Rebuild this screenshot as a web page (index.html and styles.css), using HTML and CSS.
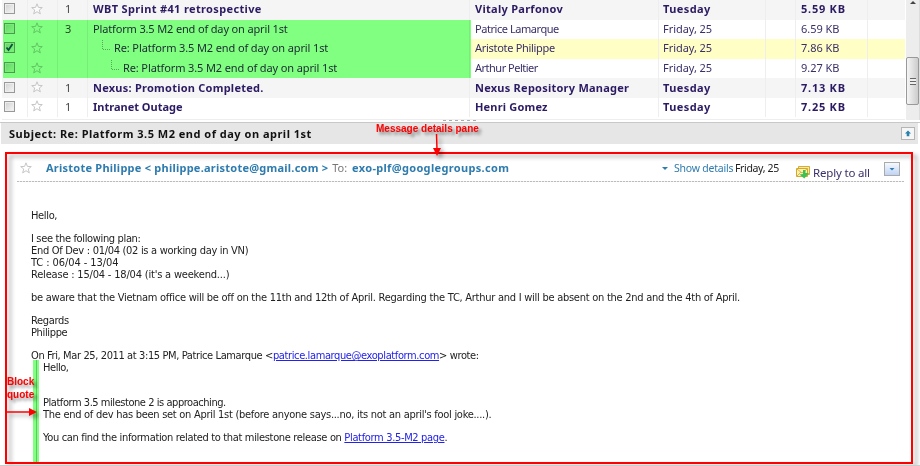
FILE: index.html
```html
<!DOCTYPE html>
<html lang="en">
<head>
<meta charset="utf-8">
<title>Mail</title>
<link rel="stylesheet" href="styles.css">
</head>
<body>
<svg class="defs" width="0" height="0"><defs>
<symbol id="star" viewBox="0 0 12 12"><path d="M6 .8 7.4 4.4 11.3 4.6 8.3 7 9.3 10.9 6 8.7 2.7 10.9 3.7 7 .7 4.6 4.6 4.4Z" fill="#fff" fill-opacity=".6" stroke="#c6c6c6" stroke-width="1"/></symbol>
<symbol id="branch" viewBox="0 0 10 11"><path d="M1.5 0V9.5H10" fill="none" stroke="#aaa" stroke-dasharray="1 1"/></symbol>
</defs></svg>
<main class="app">
<section class="list">
<div class="rows">
<div class="row unread odd"><div><i class="check"></i></div><div><svg class="star"><use href="#star"/></svg></div><div class="count">1</div><div><span class="s1">WBT Sprint #41 retrospective</span></div><div><span class="n1">Vitaly Parfonov</span></div><div class="day">Tuesday</div><div></div><div class="size">5.59 KB</div><div></div></div>
<div class="row"><div><i class="check"></i></div><div><svg class="star"><use href="#star"/></svg></div><div class="count">3</div><div><span class="s2">Platform 3.5 M2 end of day on april 1st</span></div><div><span class="n2">Patrice Lamarque</span></div><div class="day">Friday, 25</div><div></div><div class="size">6.59 KB</div><div></div></div>
<div class="row selected"><div><i class="check"><svg viewBox="0 0 9 9"><path d="M1.5 4.5 3.5 7 7.5 1" fill="none" stroke="#164f7c" stroke-width="1.8"/></svg></i></div><div><svg class="star"><use href="#star"/></svg></div><div></div><div class="reply"><svg class="branch"><use href="#branch"/></svg><span class="s3">Re: Platform 3.5 M2 end of day on april 1st</span></div><div><span class="n3">Aristote Philippe</span></div><div class="day">Friday, 25</div><div></div><div class="size">7.86 KB</div><div></div></div>
<div class="row"><div><i class="check"></i></div><div><svg class="star"><use href="#star"/></svg></div><div></div><div class="reply deep"><svg class="branch"><use href="#branch"/></svg><span class="s3">Re: Platform 3.5 M2 end of day on april 1st</span></div><div><span class="n4">Arthur Peltier</span></div><div class="day">Friday, 25</div><div></div><div class="size">9.27 KB</div><div></div></div>
<div class="row unread odd"><div><i class="check"></i></div><div><svg class="star"><use href="#star"/></svg></div><div class="count">1</div><div><span class="s5">Nexus: Promotion Completed.</span></div><div><span class="n5">Nexus Repository Manager</span></div><div class="day">Tuesday</div><div></div><div class="size">7.13 KB</div><div></div></div>
<div class="row unread last"><div><i class="check"></i></div><div><svg class="star"><use href="#star"/></svg></div><div class="count">1</div><div><span class="s6">Intranet Outage</span></div><div><span class="n6">Henri Gomez</span></div><div class="day">Tuesday</div><div></div><div class="size">7.25 KB</div><div></div></div>
<div class="thread-mark"></div>
</div>
<div class="scrollbar"><i class="up"></i><div class="thumb"><i></i></div></div>
</section>
<div class="splitter"><i></i></div>
<header class="subject"><span>Subject: Re: Platform 3.5 M2 end of day on april 1st</span><button class="collapse" aria-label="Collapse"><svg viewBox="0 0 8 8"><path d="M4 .5 7.5 4H5.5V7H2.5V4H.5Z" fill="#2782ad"/></svg></button></header>
<section class="message">
<div class="head"><svg class="star"><use href="#star"/></svg><div class="people"><b>Aristote Philippe &lt; philippe.aristote@gmail.com &gt;</b> <span class="label">To:</span> <b class="to">exo-plf@googlegroups.com</b></div>
<i class="tri"></i><span class="show">Show details</span><span class="date">Friday, 25</span>
<svg class="mail" viewBox="0 0 14 13"><path d="M2.5.5h11v8h-11z" fill="#fbe9a0" stroke="#d3ad36"/><path d="M.5 2.5h11v8H.5z" fill="#fff0ae" stroke="#d3a92c"/><path d="m1 3 5 4 5-4M1 10l4-4M11 10 7 6" fill="none" stroke="#d9b64d"/><path d="M7 4h2.5v3H13L8.3 12.5 3.5 8.5 7 8Z" fill="#3fc052"/></svg><span class="replyall">Reply to all</span><button class="drop" aria-label="More actions"><i></i></button></div>
<div class="body">
<p class="b0">Hello,</p>
<p><span class="b0">I see the following plan:</span><br><span class="b1">End Of Dev : 01/04 (02 is a working day in VN)</span><br><span class="b7">TC : 06/04 - 13/04</span><br><span class="b2">Release : 15/04 - 18/04 (it's a weekend...)</span></p>
<p class="b3">be aware that the Vietnam office will be off on the 11th and 12th of April. Regarding the TC, Arthur and I will be absent on the 2nd and the 4th of April.</p>
<p class="b0">Regards<br>Philippe</p>
<div class="b4">On Fri, Mar 25, 2011 at 3:15 PM, Patrice Lamarque &lt;<a>patrice.lamarque@exoplatform.com</a>&gt; wrote:</div>
<blockquote>Hello,<br><br><br>Platform 3.5 milestone 2 is approaching.<br><span class="b5">The end of dev has been set on April 1st (before anyone says...no, its not an april's fool joke....).</span><br><br><span class="b6">You can find the information related to that milestone release on <a>Platform 3.5-M2 page</a>.</span></blockquote>
</div>
</section>
<div class="outline"></div>
<div class="note pane-note">Message details pane</div>
<div class="note quote-note">Block<br>quote</div>
<svg class="arrow down" viewBox="0 0 10 22"><path d="M4.5 0 5 16" stroke="red" stroke-width="1.5"/><path d="M1 14h8L5 22Z" fill="red"/></svg>
<svg class="arrow right" viewBox="0 0 30 8"><path d="M0 4H24" stroke="red" stroke-width="1.5"/><path d="M22 0v8l8-4Z" fill="red"/></svg>
</main>
</body>
</html>
```
FILE: styles.css
```css
* { box-sizing: border-box; }
body { margin: 0; background: #fff; }
.defs { position: absolute; }
.app { position: relative; width: 920px; height: 466px; overflow: hidden; font-family: "Noto Sans", sans-serif; font-size: 11px; color: #222; white-space: nowrap; border-bottom: 1px solid #ccc; }
.list { display: flex; height: 120px; }
.rows { position: relative; width: 905px; padding-left: 2px; }
.row { display: grid; grid-template-columns: 26px 30px 30px 382px 189px 107px 30px 72px 37px; height: 19.6px; background: #fff; color: #3b2f68; letter-spacing: -.05px; }
.row > div { display: flex; align-items: center; padding-left: 5px; padding-bottom: 2px; border-right: 1px solid #eee; line-height: 17px; }
.row > div:first-child { padding-left: 2px; }
.row > div:nth-child(2) { padding-left: 3px; }
.row > div:last-child { border-right: 0; }
.row > .count { padding-left: 7px; color: #444; font-weight: 400; }
.row > .day { padding-left: 4px; }
.row.last { height: 22px; padding-bottom: 2px; border-bottom: 1px solid #eee; }
.odd { background: #f5f5f5; }
.selected { background: linear-gradient(90deg, #fff 469px, #ffffc5 469px); }
.unread { font-weight: 700; color: #2c1a63; }
.unread .day { letter-spacing: .4px; }
.unread .size { letter-spacing: .75px; }
.row > .reply { padding-left: 13px; gap: 3px; }
.row > .reply.deep { padding-left: 22px; }
.s1 { letter-spacing: .35px; }
.s2 { letter-spacing: -.15px; }
.s3 { letter-spacing: -.12px; }
.s5 { letter-spacing: .24px; }
.s6 { letter-spacing: 0; }
.n1 { letter-spacing: .28px; }
.n2 { letter-spacing: -.45px; }
.n3 { letter-spacing: -.3px; }
.n4 { letter-spacing: -.5px; }
.n5 { letter-spacing: .24px; }
.n6 { letter-spacing: .18px; }
.branch { width: 10px; height: 11px; margin-top: -4px; }
.check { display: block; width: 11px; height: 11px; border: 1px solid #999; background: linear-gradient(135deg, #d0d0d0, #f7f7f7); box-shadow: inset 0 0 0 1px #eee; }
.check svg { display: block; width: 9px; height: 9px; }
.star { width: 12px; height: 12px; flex: none; }
.thread-mark { position: absolute; left: 3px; top: 20px; width: 468px; height: 58px; background: #80ff80; mix-blend-mode: multiply; }
.scrollbar { width: 14px; margin-left: 1px; background: #ededed; display: flex; flex-direction: column; align-items: center; border-right: 1px solid #ddd; }
.up { margin-top: 1px; border: 3px solid transparent; border-top: 0; border-bottom: 3px solid #444; }
.thumb { margin-top: 53px; width: 13px; height: 48px; border: 1px solid #999; border-radius: 2px; background: linear-gradient(90deg, #f5f5f5, #ccc); display: flex; align-items: center; justify-content: center; }
.thumb i { width: 6px; height: 7px; background: repeating-linear-gradient(#666 0 1px, #eee 1px 3px); }
.splitter { height: 3px; border-bottom: 1px solid #c8c8c8; padding-left: 443px; }
.splitter i { display: block; width: 33px; height: 1px; background: repeating-linear-gradient(90deg, #aaa 0 3px, transparent 3px 6px); }
.subject { display: flex; justify-content: space-between; align-items: center; width: 917px; height: 21px; margin-left: 1px; padding: 0 3px 0 8px; background: #e6e6e6; font-weight: 700; color: #111; letter-spacing: .5px; }
.collapse { width: 14px; height: 13px; padding: 2px; border: 1px solid #b5b5b5; background: #f6f6f6; }
.collapse svg { display: block; width: 8px; height: 7px; }
.message { margin: 12px 0 0 17px; width: 887px; }
.head { display: flex; height: 26px; background: repeating-linear-gradient(90deg, #bbb 0 2px, #eee 2px 3px) 0 100% / 100% 1px no-repeat; padding-left: 3px; line-height: 15px; }
.head > * { flex: none; }
.head .star { margin-top: 6px; }
.people { width: 616px; margin: 4px 0 0 14px; color: #777; }
.people b { color: #2e7bae; letter-spacing: .24px; }
.people .label { margin: 0 2px 0 1px; }
.people b.to { letter-spacing: .33px; }
.tri { margin: 11px 6px 0 0; width: 6px; height: 3px; background: #2e7bae; clip-path: polygon(0 0, 100% 0, 50% 100%); }
.show { width: 61px; margin-top: 5px; color: #2e7bae; font-size: 10.5px; letter-spacing: -.22px; }
.date { width: 61px; margin-top: 5px; font-size: 10.5px; color: #222; letter-spacing: -.35px; }
.mail { width: 14px; height: 13px; margin-top: 10px; }
.replyall { width: 71px; margin: 9px 0 0 3px; font-size: 11.5px; letter-spacing: -.18px; color: #3b2f68; }
.drop { width: 16px; height: 14px; margin-top: 6px; padding: 0; border: 1px solid #aaa; background: linear-gradient(#f5f9ff, #bfd3f5); display: flex; justify-content: center; align-items: center; }
.drop i { width: 6px; height: 3px; background: #2e7bae; clip-path: polygon(0 0, 100% 0, 50% 100%); }
.body { margin: 28px 0 0 14px; font: 11px/11.7px "DejaVu Sans Condensed", "DejaVu Sans", sans-serif; font-stretch: condensed; color: #222; }
.body p { margin: 0 0 11.7px; }
.body a { color: #2222e8; text-decoration: underline; }
.body blockquote { margin: -2px 0 0 2px; height: 103px; padding: 2px 0 0 10px; letter-spacing: -.45px; background: linear-gradient(90deg, #80ff80 0 3px, #60c860 3px 4px, #80ff80 4px 6px, transparent 6px); }
.b0 { letter-spacing: -.35px; }
.b1 { letter-spacing: -.3px; }
.b2 { letter-spacing: -.19px; }
.b3 { letter-spacing: -.26px; }
.b4 { letter-spacing: -.385px; }
.b5 { letter-spacing: -.28px; }
.b6 { letter-spacing: -.335px; }
.b7 { letter-spacing: -.08px; }
.outline { position: absolute; left: 5px; top: 152px; width: 908px; height: 312px; border: 2px solid #f00; filter: drop-shadow(4px 3px 2px rgba(0,0,0,.35)); }
.note { position: absolute; font: bold 10px/12px "Liberation Sans", sans-serif; color: #f00; text-shadow: 3px 3px 3px rgba(0,0,0,.4); }
.pane-note { left: 376px; top: 123px; }
.quote-note { left: 7px; top: 376px; line-height: 12.5px; }
.arrow { position: absolute; filter: drop-shadow(3px 3px 2px rgba(0,0,0,.4)); }
.down { left: 432px; top: 134px; width: 10px; height: 22px; }
.right { left: 7px; top: 408px; width: 30px; height: 8px; }
```
